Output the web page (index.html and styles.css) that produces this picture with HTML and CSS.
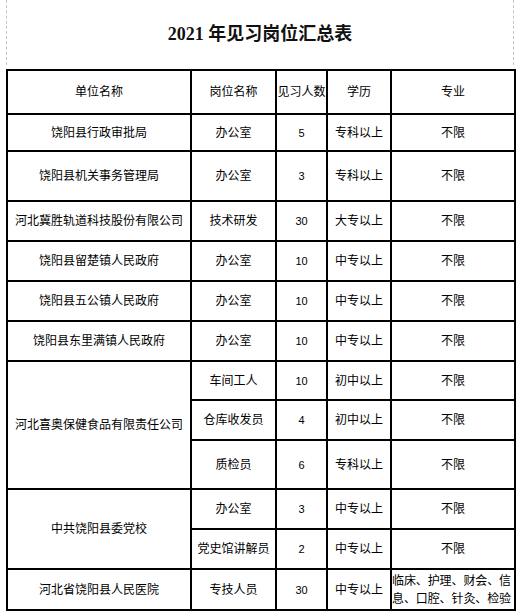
FILE: index.html
```html
<!DOCTYPE html>
<html lang="zh-CN">
<head>
<meta charset="utf-8">
<title>2021年见习岗位汇总表</title>
<link rel="stylesheet" href="styles.css">
</head>
<body>
<div class="page">
  <div class="page-head">
    <h1 class="title">2021 年见习岗位汇总表</h1>
  </div>
  <table class="posts">
    <colgroup>
      <col class="c-unit">
      <col class="c-post">
      <col class="c-num">
      <col class="c-edu">
      <col class="c-major">
    </colgroup>
    <thead>
      <tr class="r-head">
        <th>单位名称</th>
        <th>岗位名称</th>
        <th>见习人数</th>
        <th>学历</th>
        <th>专业</th>
      </tr>
    </thead>
    <tbody>
      <tr class="r-37">
        <td>饶阳县行政审批局</td><td>办公室</td><td class="num">5</td><td>专科以上</td><td>不限</td>
      </tr>
      <tr class="r-50">
        <td>饶阳县机关事务管理局</td><td>办公室</td><td class="num">3</td><td>专科以上</td><td>不限</td>
      </tr>
      <tr class="r-40">
        <td>河北冀胜轨道科技股份有限公司</td><td>技术研发</td><td class="num">30</td><td>大专以上</td><td>不限</td>
      </tr>
      <tr class="r-40">
        <td>饶阳县留楚镇人民政府</td><td>办公室</td><td class="num">10</td><td>中专以上</td><td>不限</td>
      </tr>
      <tr class="r-40">
        <td>饶阳县五公镇人民政府</td><td>办公室</td><td class="num">10</td><td>中专以上</td><td>不限</td>
      </tr>
      <tr class="r-40">
        <td>饶阳县东里满镇人民政府</td><td>办公室</td><td class="num">10</td><td>中专以上</td><td>不限</td>
      </tr>
      <tr class="r-39">
        <td rowspan="3">河北喜奥保健食品有限责任公司</td><td>车间工人</td><td class="num">10</td><td>初中以上</td><td>不限</td>
      </tr>
      <tr class="r-40">
        <td>仓库收发员</td><td class="num">4</td><td>初中以上</td><td>不限</td>
      </tr>
      <tr class="r-49">
        <td>质检员</td><td class="num">6</td><td>专科以上</td><td>不限</td>
      </tr>
      <tr class="r-40">
        <td rowspan="2">中共饶阳县委党校</td><td>办公室</td><td class="num">3</td><td>中专以上</td><td>不限</td>
      </tr>
      <tr class="r-40">
        <td>党史馆讲解员</td><td class="num">2</td><td>中专以上</td><td>不限</td>
      </tr>
      <tr class="r-41">
        <td>河北省饶阳县人民医院</td><td>专技人员</td><td class="num">30</td><td>中专以上</td><td class="major-list">临床、护理、财会、信<br>息、口腔、针灸、检验</td>
      </tr>
    </tbody>
  </table>
</div>
</body>
</html>
```

FILE: styles.css
```css
html, body {
  margin: 0;
  padding: 0;
  background: #ffffff;
}

.page {
  width: 520px;
  color: #000;
  font-family: "Liberation Sans", "Noto Sans CJK SC", sans-serif;
  font-size: 12px;
}

.page-head {
  margin: 0 6px 0 6px;
  height: 62px;
  padding-top: 3px;
  border-left: 1px dashed #c4c4c4;
  border-right: 1px dashed #c4c4c4;
  display: flex;
  align-items: center;
  justify-content: center;
}

.title {
  margin: 0;
  font-family: "Liberation Serif", "Noto Sans CJK SC", serif;
  font-weight: bold;
  font-size: 18px;
  line-height: 22px;
  color: #111;
}

.posts {
  margin: 4px 0 0 6px;
  width: 508px;
  table-layout: fixed;
  border-collapse: collapse;
  border: 2px solid #000;
}

.c-unit { width: 184px; }
.c-post { width: 85px; }
.c-num { width: 51px; }
.c-edu { width: 64px; }
.c-major { width: 124px; }

.posts th,
.posts td {
  border: 2px solid #000;
  padding: 0;
  text-align: center;
  vertical-align: middle;
  font-weight: normal;
  font-size: 12px;
  line-height: 16px;
  white-space: nowrap;
  overflow: hidden;
}

.posts td.num {
  font-size: 11px;
}

.posts td.major-list {
  text-align: left;
  line-height: 18px;
  padding: 0;
  letter-spacing: -0.1px;
}

.r-head { height: 44px; }
.r-37 { height: 37px; }
.r-50 { height: 50px; }
.r-39 { height: 39px; }
.r-40 { height: 40px; }
.r-41 { height: 41px; }
.r-49 { height: 49px; }
```
